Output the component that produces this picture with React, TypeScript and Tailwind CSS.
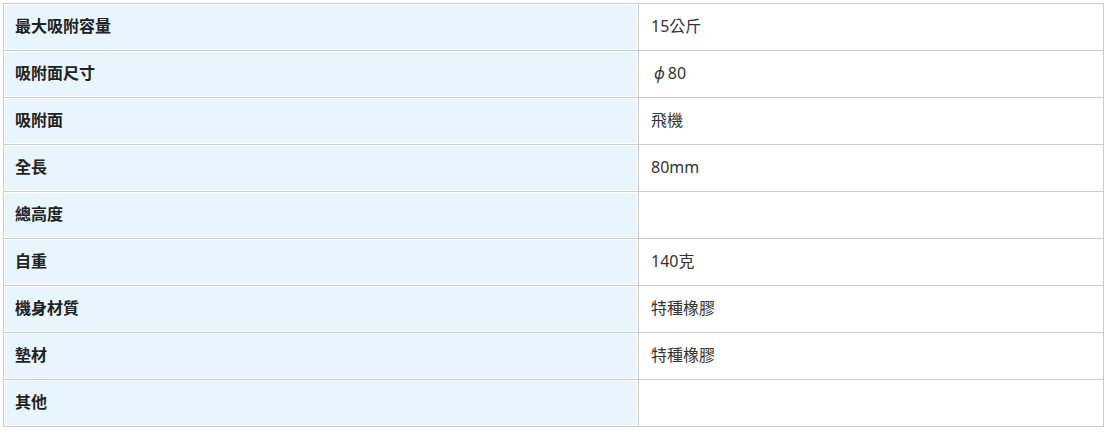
import React from "react";

interface SpecRow {
  label: string;
  value: React.ReactNode;
}

const rows: SpecRow[] = [
  { label: "最大吸附容量", value: "15公斤" },
  {
    label: "吸附面尺寸",
    value: (
      <>
        <span className="ml-[3px] mr-[3px] italic">ϕ</span>80
      </>
    ),
  },
  { label: "吸附面", value: "飛機" },
  { label: "全長", value: "80mm" },
  { label: "總高度", value: "" },
  { label: "自重", value: "140克" },
  { label: "機身材質", value: "特種橡膠" },
  { label: "墊材", value: "特種橡膠" },
  { label: "其他", value: "" },
];

const App: React.FC = () => {
  return (
    <div
      className="bg-white w-[1108px] h-[432px] p-[3px]"
      style={{ fontFamily: '"Noto Sans", "Noto Sans CJK TC", sans-serif' }}
    >
      <div className="w-[1101px] border border-[#cccccc]">
        {rows.map((row, index) => (
          <div
            key={index}
            className={
              "flex " +
              (index < rows.length - 1 ? "h-[47px] border-b border-[#cccccc]" : "h-[46px]")
            }
          >
            <div className="w-[632px] h-[44px] p-px border-r border-[#cccccc] box-content">
              <div className="h-full bg-[#e8f5fd] flex items-center pl-[10px] pb-[2px] text-[16px] font-bold text-[#222222]">
                {row.label}
              </div>
            </div>
            <div className="flex-1 h-[46px] flex items-center pl-[12px] pb-[2px] text-[16px] text-[#333333]">
              {row.value}
            </div>
          </div>
        ))}
      </div>
    </div>
  );
};

export default App;
